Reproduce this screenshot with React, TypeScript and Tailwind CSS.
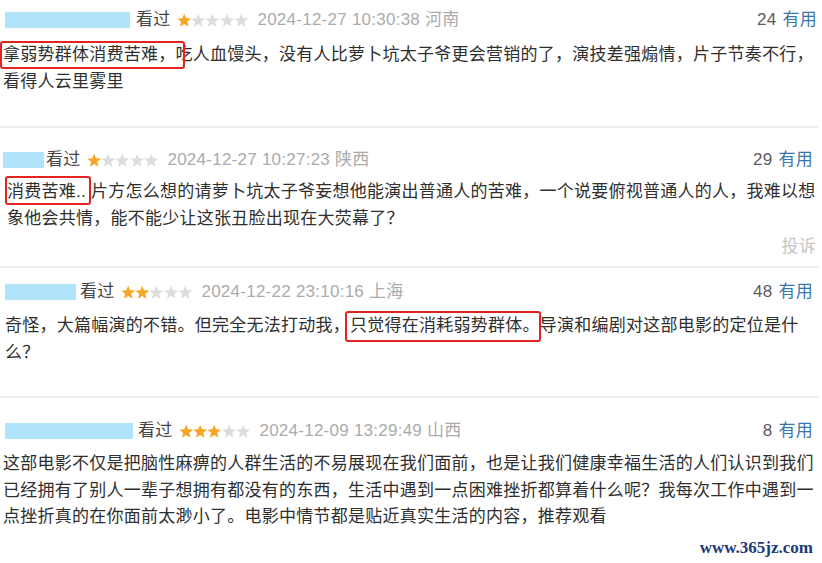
import React from 'react';

type Seg = { t: string; box?: string };

interface Review {
  id: number;
  nameLeft: string;
  nameWidth: string;
  nameGap: string;
  rating: number;
  time: string;
  region: string;
  useful: number;
  pad: string;
  bodyTop: string;
  bodyLeft: string;
  lines: Seg[][];
  report?: boolean;
}

const reviews: Review[] = [
  {
    id: 1,
    nameLeft: 'ml-[5px]',
    nameWidth: 'w-[125px]',
    nameGap: 'ml-[6px]',
    rating: 1,
    time: '2024-12-27 10:30:38',
    region: '河南',
    useful: 24,
    pad: 'pt-[7px] pb-[31px]',
    bodyTop: 'mt-[9px]',
    bodyLeft: 'pl-[3px]',
    lines: [
      [
        { t: '拿弱势群体消费苦难，', box: '-left-[3px] -right-[9px] -top-[1px] bottom-[0px]' },
        { t: '吃人血馒头，没有人比萝卜坑太子爷更会营销的了，演技差强煽情，片子节奏不行，' },
      ],
      [{ t: '看得人云里雾里' }],
    ],
  },
  {
    id: 2,
    nameLeft: 'ml-[3px]',
    nameWidth: 'w-[41px]',
    nameGap: 'ml-[2px]',
    rating: 1,
    time: '2024-12-27 10:27:23',
    region: '陕西',
    useful: 29,
    pad: 'pt-[19px] pb-[6px]',
    bodyTop: 'mt-[6px]',
    bodyLeft: 'pl-[7px]',
    report: true,
    lines: [
      [
        { t: '消费苦难..', box: '-left-[2px] -right-[5px] -top-[3px] bottom-[1px]' },
        { t: ' 片方怎么想的请萝卜坑太子爷妄想他能演出普通人的苦难，一个说要俯视普通人的人，我难以想' },
      ],
      [{ t: '象他会共情，能不能少让这张丑脸出现在大荧幕了？' }],
    ],
  },
  {
    id: 3,
    nameLeft: 'ml-[5px]',
    nameWidth: 'w-[71px]',
    nameGap: 'ml-[4px]',
    rating: 2,
    time: '2024-12-22 23:10:16',
    region: '上海',
    useful: 48,
    pad: 'pt-[11px] pb-[30px]',
    bodyTop: 'mt-[8px]',
    bodyLeft: 'pl-[5px]',
    lines: [
      [
        { t: '奇怪，大篇幅演的不错。但完全无法打动我，' },
        { t: '只觉得在消耗弱势群体。', box: '-left-[5px] -right-[1px] -top-[2px] -bottom-[2px]' },
        { t: '导演和编剧对这部电影的定位是什' },
      ],
      [{ t: '么？' }],
    ],
  },
  {
    id: 4,
    nameLeft: 'ml-[5px]',
    nameWidth: 'w-[128px]',
    nameGap: 'ml-[5px]',
    rating: 3,
    time: '2024-12-09 13:29:49',
    region: '山西',
    useful: 8,
    pad: 'pt-[20px] pb-[2px]',
    bodyTop: 'mt-[7px]',
    bodyLeft: 'pl-[3px]',
    lines: [
      [{ t: '这部电影不仅是把脑性麻痹的人群生活的不易展现在我们面前，也是让我们健康幸福生活的人们认识到我们' }],
      [{ t: '已经拥有了别人一辈子想拥有都没有的东西，生活中遇到一点困难挫折都算着什么呢？我每次工作中遇到一' }],
      [{ t: '点挫折真的在你面前太渺小了。电影中情节都是贴近真实生活的内容，推荐观看' }],
    ],
  },
];

function Star({ on }: { on: boolean }) {
  return (
    <svg width="14.4" height="15" viewBox="0 0 20 20" className="shrink-0">
      <polygon
        points="10,0.6 12.6,7 19.6,7.4 14.2,11.8 15.9,18.8 10,15 4.1,18.8 5.8,11.8 0.4,7.4 7.4,7"
        fill={on ? '#f6a623' : '#dddddd'}
      />
    </svg>
  );
}

function Stars({ n }: { n: number }) {
  return (
    <div className="ml-[6px] flex items-center">
      {[0, 1, 2, 3, 4].map((i) => (
        <Star key={i} on={i < n} />
      ))}
    </div>
  );
}

export default function App() {
  return (
    <div className="w-[822px] h-[563px] overflow-hidden bg-white font-['Liberation_Sans','Noto_Sans_CJK_SC',sans-serif] text-[17px] tracking-[0.25px]">
      {reviews.map((r, idx) => (
        <div key={r.id} className={`${r.pad} ${idx > 0 ? 'border-t-2 border-[#ededed] mr-[4px]' : ''}`}>
          {/* header */}
          <div className="flex items-center h-[26px] pr-[5px]">
            <div className={`${r.nameLeft} ${r.nameWidth} h-[16px] bg-[#b0e4fa]`} />
            <span className={`${r.nameGap} text-[#444]`}>看过</span>
            <Stars n={r.rating} />
            <span className="ml-[9px] text-[#ababab]">
              {r.time} {r.region}
            </span>
            <span className="ml-auto text-[#5a5a5a]">{r.useful}</span>
            <span className="ml-[6px] text-[#3a77aa]">有用</span>
          </div>

          {/* body */}
          <div className={`${r.bodyTop} ${r.bodyLeft} text-[#2f2f2f] leading-[26.5px] whitespace-nowrap`}>
            {r.lines.map((line, li) => (
              <div key={li}>
                {line.map((s, si) =>
                  s.box ? (
                    <span key={si} className="relative inline-block">
                      {s.t}
                      <span className={`absolute ${s.box} border-2 border-[#e3231f] rounded-[3px]`} />
                    </span>
                  ) : (
                    <span key={si}>{s.t}</span>
                  )
                )}
              </div>
            ))}
          </div>

          {r.report && (
            <div className="mt-[2px] h-[26px] leading-[26px] text-right pr-[2px] text-[#c4c4c4]">投诉</div>
          )}
          {r.id === 4 && (
            <div className="mt-[4px] h-[26px] leading-[26px] text-right pr-[5px] font-['Liberation_Serif',serif] font-bold text-[17px] tracking-normal text-[#1d3a78]">
              www.365jz.com
            </div>
          )}
        </div>
      ))}
    </div>
  );
}
